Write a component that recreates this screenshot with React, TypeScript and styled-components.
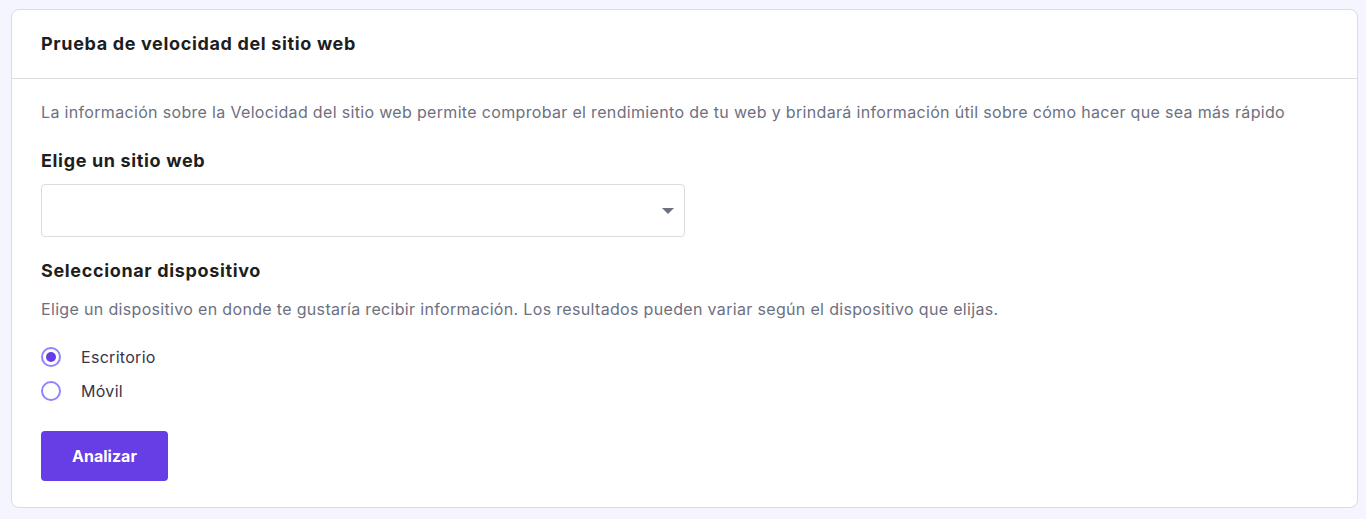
import React, { useState } from 'react';
import styled, { createGlobalStyle } from 'styled-components';

const GlobalStyle = createGlobalStyle`
  body {
    margin: 0;
    background-color: #f4f5ff;
    font-family: Inter, 'Noto Sans', sans-serif;
    color: #1d1e20;
  }
`;

const DEVICES: Array<string> = ['Escritorio', 'Móvil'];

const App: React.FC = () => {
  const [device, setDevice] = useState<string>('Escritorio');

  return (
    <Page>
      <GlobalStyle />
      <Card>
        <CardHeader>
          <CardTitle>Prueba de velocidad del sitio web</CardTitle>
        </CardHeader>
        <CardBody>
          <Description>
            La información sobre la Velocidad del sitio web permite comprobar el rendimiento de tu web y brindará
            información útil sobre cómo hacer que sea más rápido
          </Description>
          <SectionTitle top={25} bottom={11}>
            Elige un sitio web
          </SectionTitle>
          <SelectBox>
            <Caret />
          </SelectBox>
          <SectionTitle top={22} bottom={14}>
            Seleccionar dispositivo
          </SectionTitle>
          <Description>
            Elige un dispositivo en donde te gustaría recibir información. Los resultados pueden variar según el
            dispositivo que elijas.
          </Description>
          <RadioList>
            {DEVICES.map((name: string) => (
              <RadioRow key={name} onClick={() => setDevice(name)}>
                <RadioCircle checked={device === name} />
                <RadioLabel>{name}</RadioLabel>
              </RadioRow>
            ))}
          </RadioList>
          <AnalyzeButton>Analizar</AnalyzeButton>
        </CardBody>
      </Card>
    </Page>
  );
};

const Page = styled.div`
  padding: 9px 8px 10px 11px;
`;

const Card = styled.section`
  background-color: #ffffff;
  border: 1px solid #dadce0;
  border-radius: 8px;
`;

const CardHeader = styled.header`
  display: flex;
  align-items: center;
  box-sizing: border-box;
  height: 69px;
  padding: 0 29px 2px;
  border-bottom: 1px solid #dadce0;
`;

const CardTitle = styled.h2`
  margin: 0;
  font-size: 18px;
  font-weight: 700;
  letter-spacing: 0.65px;
  color: #1d1e20;
`;

const CardBody = styled.div`
  display: flex;
  flex-direction: column;
  align-items: flex-start;
  padding: 21px 29px 26px;
`;

const Description = styled.p`
  margin: 0;
  font-size: 16px;
  line-height: 24px;
  letter-spacing: 0.33px;
  color: #6d7081;
  white-space: nowrap;
`;

const SectionTitle = styled.h3<{ top: number; bottom: number }>`
  margin: ${({ top, bottom }) => `${top}px 0 ${bottom}px`};
  font-size: 18px;
  font-weight: 700;
  line-height: 24px;
  letter-spacing: 0.65px;
  color: #1d1e20;
`;

const SelectBox = styled.div`
  position: relative;
  box-sizing: border-box;
  width: 644px;
  height: 53px;
  border: 1px solid #dadce0;
  border-radius: 4px;
`;

const Caret = styled.span`
  position: absolute;
  top: 23px;
  right: 10px;
  width: 0;
  height: 0;
  border-left: 6px solid transparent;
  border-right: 6px solid transparent;
  border-top: 6px solid #6d7081;
`;

const RadioList = styled.div`
  display: flex;
  flex-direction: column;
  gap: 10px;
  margin-top: 24px;
`;

const RadioRow = styled.label`
  display: flex;
  align-items: center;
  height: 24px;
  cursor: pointer;
`;

const RadioCircle = styled.span<{ checked: boolean }>`
  box-sizing: border-box;
  display: flex;
  align-items: center;
  justify-content: center;
  width: 20px;
  height: 20px;
  border: 2px solid #8c85ff;
  border-radius: 50%;

  &::after {
    content: '';
    display: ${({ checked }) => (checked ? 'block' : 'none')};
    width: 10px;
    height: 10px;
    border-radius: 50%;
    background-color: #673de6;
  }
`;

const RadioLabel = styled.span`
  margin-left: 20px;
  font-size: 16px;
  letter-spacing: 0.3px;
  color: #36344d;
`;

const AnalyzeButton = styled.button`
  margin-top: 28px;
  width: 127px;
  height: 50px;
  border: none;
  border-radius: 4px;
  background-color: #673de6;
  color: #ffffff;
  font-family: Inter, 'Noto Sans', sans-serif;
  font-size: 16px;
  font-weight: 700;
  cursor: pointer;
`;

export default App;
